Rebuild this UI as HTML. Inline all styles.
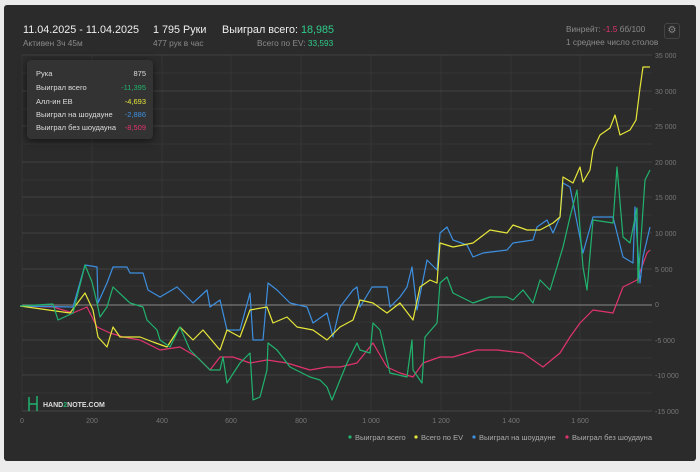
<!DOCTYPE html><html><head><meta charset="utf-8"><style>
body{margin:0;width:700px;height:472px;background:#ececec;font-family:"Liberation Sans",sans-serif;overflow:hidden;position:relative}
.p{position:absolute;left:4px;top:5px;width:692px;height:456px;background:#2b2b2b;border-radius:3px}
.t{position:absolute;white-space:nowrap}
.w{color:#f0f0f0;font-size:10.8px}.g{color:#8a8a8a;font-size:8.3px}
.tip{position:absolute;left:27px;top:60px;width:126px;height:79px;background:#333;border-radius:4px;box-shadow:0 2px 8px rgba(0,0,0,.5);font-size:7.5px;color:#ddd}
.tip div{position:absolute;left:9px;right:7px;display:flex;justify-content:space-between}
</style></head><body>
<div class="p"></div>
<div class="t w" style="left:23px;top:24px">11.04.2025 - 11.04.2025</div>
<div class="t g" style="left:23px;top:38px">Активен 3ч 45м</div>
<div class="t w" style="left:153px;top:24px">1 795 Руки</div>
<div class="t g" style="left:153px;top:38px">477 рук в час</div>
<div class="t w" style="left:222px;top:24px">Выиграл всего: <span style="color:#2ecc8a">18,985</span></div>
<div class="t g" style="left:257px;top:38px">Всего по EV: <span style="color:#2ecc8a">33,593</span></div>
<div class="t g" style="left:566px;top:24px">Винрейт: <span style="color:#e0336e">-1.5</span> бб/100</div>
<div class="t g" style="left:566px;top:37px">1 среднее число столов</div>
<div style="position:absolute;left:664px;top:23px;width:14px;height:14px;border:1px solid #444;border-radius:3px;color:#888;font-size:10px;text-align:center;line-height:14px">⚙</div>
<svg style="position:absolute;left:0;top:0" width="700" height="472" font-family="Liberation Sans" font-size="7" fill="#777">
<g stroke="#353535" stroke-width="1">
<line x1="22" x2="652" y1="73" y2="73"/><line x1="22" x2="652" y1="109" y2="109"/><line x1="22" x2="652" y1="144" y2="144"/><line x1="22" x2="652" y1="180" y2="180"/><line x1="22" x2="652" y1="215" y2="215"/><line x1="22" x2="652" y1="251" y2="251"/><line x1="22" x2="652" y1="286" y2="286"/><line x1="22" x2="652" y1="322" y2="322"/><line x1="22" x2="652" y1="358" y2="358"/><line x1="22" x2="652" y1="393" y2="393"/>
<line x1="22" x2="22" y1="55" y2="411"/><line x1="92" x2="92" y1="55" y2="411"/><line x1="162" x2="162" y1="55" y2="411"/><line x1="231" x2="231" y1="55" y2="411"/><line x1="301" x2="301" y1="55" y2="411"/><line x1="371" x2="371" y1="55" y2="411"/><line x1="441" x2="441" y1="55" y2="411"/><line x1="511" x2="511" y1="55" y2="411"/><line x1="580" x2="580" y1="55" y2="411"/>
</g>
<g stroke="#404040"><line x1="22" x2="652" y1="55" y2="55"/><line x1="22" x2="652" y1="91" y2="91"/><line x1="22" x2="652" y1="126" y2="126"/><line x1="22" x2="652" y1="162" y2="162"/><line x1="22" x2="652" y1="197" y2="197"/><line x1="22" x2="652" y1="233" y2="233"/><line x1="22" x2="652" y1="269" y2="269"/><line x1="22" x2="652" y1="340" y2="340"/><line x1="22" x2="652" y1="375" y2="375"/></g>
<line x1="22" x2="652" y1="305" y2="305" stroke="#888"/>
<line x1="22" x2="652" y1="411" y2="411" stroke="#444"/>
<g text-anchor="start"><text x="655" y="58">35 000</text><text x="655" y="94">30 000</text><text x="655" y="129">25 000</text><text x="655" y="165">20 000</text><text x="655" y="200">15 000</text><text x="655" y="236">10 000</text><text x="655" y="272">5 000</text><text x="655" y="307">0</text><text x="655" y="343">-5 000</text><text x="655" y="378">-10 000</text><text x="655" y="414">-15 000</text></g>
<g text-anchor="middle"><text x="22" y="423">0</text><text x="92" y="423">200</text><text x="162" y="423">400</text><text x="231" y="423">600</text><text x="301" y="423">800</text><text x="371" y="423">1 000</text><text x="441" y="423">1 200</text><text x="511" y="423">1 400</text><text x="580" y="423">1 600</text></g>
<g fill="none" stroke-width="1.2" stroke-linejoin="round">
<polyline stroke="#e0336e" points="20,306 53,307 73,313 87,307 97,327 110,333 123,337 140,340 160,350 180,347 197,357 210,370 220,357 233,357 250,363 267,360 287,363 310,370 327,367 340,367 357,363 373,343 387,367 400,373 413,377 423,363 440,357 453,357 477,350 497,350 523,353 543,367 560,353 570,337 580,323 593,310 613,313 623,287 637,280 647,253 650,250"/>
<polyline stroke="#3d8fe0" points="20,306 73,307 77,293 85,265 97,267 98,303 107,283 113,267 127,267 130,273 143,273 148,290 160,297 177,287 193,303 207,290 210,307 220,300 227,330 240,330 250,293 253,340 263,340 268,283 277,290 290,303 307,307 313,323 327,313 333,337 340,307 353,290 357,287 360,307 372,287 387,287 390,307 400,297 407,287 412,267 417,310 427,260 437,270 440,233 447,227 453,240 467,245 473,257 483,253 507,250 513,243 533,240 537,227 547,220 553,233 560,217 563,183 570,187 583,253 593,217 613,217 623,257 633,263 635,207 640,283 643,257 650,227"/>
<polyline stroke="#e6e63a" points="20,306 70,313 85,293 93,310 98,337 107,347 113,327 120,337 140,337 153,342 167,347 180,327 193,340 203,330 220,350 227,330 240,337 250,310 267,307 273,323 287,317 297,327 313,330 327,340 340,327 353,320 360,300 373,303 387,313 400,303 413,320 420,287 430,280 437,283 440,243 453,247 473,243 490,230 507,233 513,225 527,230 540,230 553,223 560,217 563,177 573,183 580,167 583,182 590,170 593,150 600,135 610,128 615,115 620,135 630,130 636,120 640,88 643,67 650,67"/>
<polyline stroke="#21b36e" points="20,306 53,304 58,320 73,313 85,265 92,282 97,303 100,317 107,307 113,287 130,303 143,307 147,320 157,330 160,340 170,347 180,327 190,350 200,360 210,370 220,370 223,357 227,383 240,363 250,353 253,400 260,397 267,370 268,343 277,350 290,367 310,377 320,380 327,387 332,400 340,380 347,363 357,343 360,350 370,353 373,323 380,330 390,373 407,377 412,340 413,370 422,383 425,337 437,323 440,283 447,277 453,293 473,303 490,297 507,297 513,300 523,290 533,303 540,280 550,290 557,267 563,247 570,217 577,190 583,267 587,290 593,220 613,223 617,167 623,237 630,243 637,208 638,283 645,180 650,170"/>
</g>
<g font-size="7.5" fill="#aaa"><circle cx="350" cy="437" r="1.6" fill="#21b36e"/><text x="355" y="440">Выиграл всего</text>
<circle cx="416" cy="437" r="1.6" fill="#e6e63a"/><text x="421" y="440">Всего по EV</text>
<circle cx="474" cy="437" r="1.6" fill="#3d8fe0"/><text x="479" y="440">Выиграл на шоудауне</text>
<circle cx="567" cy="437" r="1.6" fill="#e0336e"/><text x="572" y="440">Выиграл без шоудауна</text></g>
<path d="M29 397v14M29 404h8M37 404v-8M37 404v7" stroke="#21b36e" stroke-width="1.5" fill="none"/>
<text x="43" y="407" fill="#ddd" font-weight="bold" font-size="7">HAND<tspan fill="#21b36e">2</tspan>NOTE.COM</text>
</svg>
<div class="tip">
<div style="top:9px"><span>Рука</span><span>875</span></div>
<div style="top:23px"><span>Выиграл всего</span><span style="color:#21b36e">-11,395</span></div>
<div style="top:37px"><span>Алл-ин ЕВ</span><span style="color:#e6e63a">-4,693</span></div>
<div style="top:50px"><span>Выиграл на шоудауне</span><span style="color:#3d8fe0">-2,886</span></div>
<div style="top:63px"><span>Выиграл без шоудауна</span><span style="color:#e0336e">-8,509</span></div>
</div>
</body></html>
